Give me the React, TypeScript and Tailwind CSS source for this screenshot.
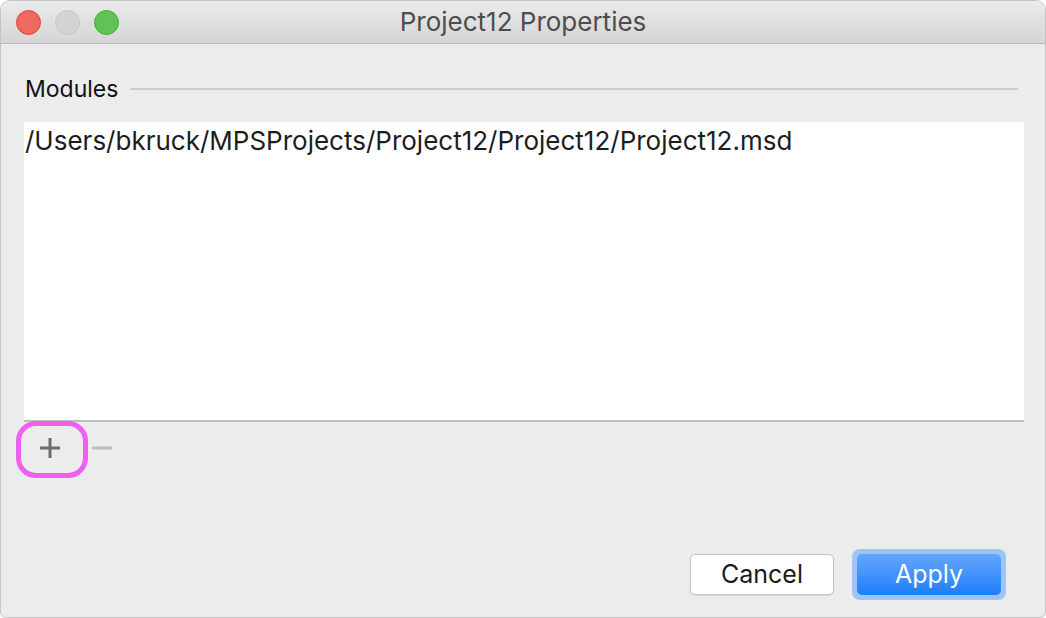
export default function App() {
  const font = { fontFamily: '"Inter", "Liberation Sans", sans-serif' };
  return (
    <div className="w-[1046px] h-[618px] bg-white" style={font}>
      <div className="flex h-full flex-col overflow-hidden rounded-t-[10px] rounded-b-[6px] border border-[#c4c4c4] bg-[#ececec]">
        {/* title bar */}
        <div className="relative flex h-[43px] shrink-0 items-center justify-center border-b border-[#b8b8b8] bg-gradient-to-b from-[#ebebeb] to-[#d5d5d5]">
          <div className="absolute left-[15px] top-[9px] flex gap-[14px]">
            <span className="h-[25px] w-[25px] rounded-full border border-[#e0443e] bg-[#ee6a5f]" />
            <span className="h-[25px] w-[25px] rounded-full border border-[#c6c6c6] bg-[#d3d3d3]" />
            <span className="h-[25px] w-[25px] rounded-full border border-[#3fae2f] bg-[#5fc453]" />
          </div>
          <span className="text-[26px] leading-[30px] text-[#4d4d4d]">Project12 Properties</span>
        </div>

        <div className="flex flex-1 flex-col pl-[23px] pr-[21px]">
          <div className="mt-[32px] flex items-center gap-3 pl-[1px] pr-[6px]">
            <span className="text-[23px] leading-[26px] text-[#111]">Modules</span>
            <div className="h-[2px] flex-1 bg-[#cdcdcd]" />
          </div>

          <div className="mt-[20px] h-[300px] border-b-2 border-[#bdbdbd] bg-white">
            <div className="pl-[1px] pt-[4px] text-[26px] leading-[30px] text-[#1d1d1d]">
              /Users/bkruck/MPSProjects/Project12/Project12/Project12.msd
            </div>
          </div>

          <div className="relative flex items-center">
            <div className="absolute left-[-8px] top-[-1px] h-[57px] w-[72px] rounded-[20px] border-[5px] border-[#ee5ff2]" />
            <button className="flex h-[52px] w-[50px] items-center justify-center pl-[2px]">
              <svg width="20" height="20" viewBox="0 0 20 20">
                <path d="M10 0v20M0 10h20" stroke="#6b6b6b" strokeWidth="3" />
              </svg>
            </button>
            <button className="ml-[18px] flex h-[52px] items-center">
              <svg width="20" height="4" viewBox="0 0 20 4">
                <path d="M0 2h20" stroke="#bdbdbd" strokeWidth="3" />
              </svg>
            </button>
          </div>

          <div className="mt-auto mb-[17px] flex items-center justify-end gap-[18px] pr-[18px]">
            <button className="h-[41px] w-[144px] rounded-[5px] border border-[#c2c2c2] bg-white text-[25px] text-[#1a1a1a] shadow-[0_1px_1px_rgba(0,0,0,0.08)]">
              Cancel
            </button>
            <div className="rounded-[8px] bg-[#9cc4f6] p-[5px]">
              <button className="h-[41px] w-[144px] rounded-[5px] bg-gradient-to-b from-[#62a6fb] to-[#1a7efb] text-[25px] text-white">
                Apply
              </button>
            </div>
          </div>
        </div>
      </div>
    </div>
  );
}
